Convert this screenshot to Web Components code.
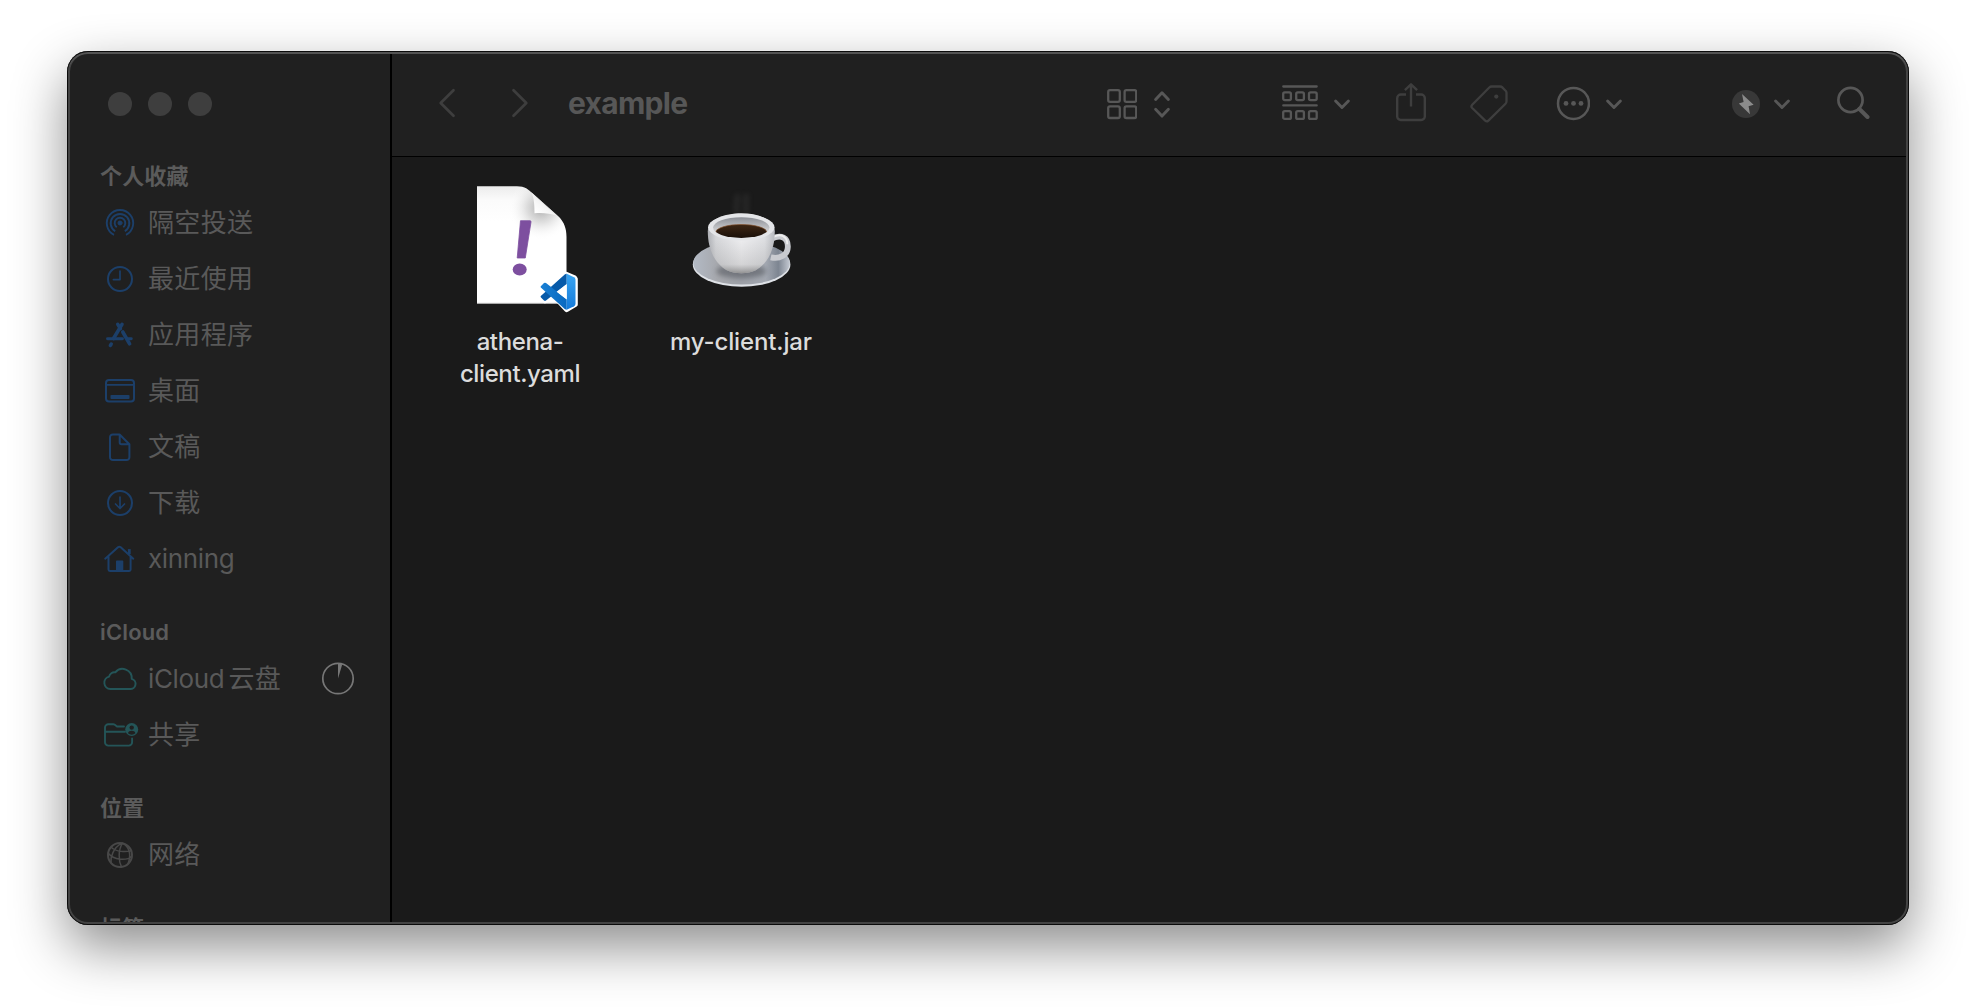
<!DOCTYPE html>
<html lang="zh-CN">
<head>
<meta charset="utf-8">
<title>example</title>
<style>
html,body{margin:0;height:100%;background:#fff;overflow:hidden}
body{font-family:Inter,"Noto Sans CJK SC",sans-serif;-webkit-font-smoothing:antialiased}
</style>
</head>
<body>
<finder-window>
  <side-bar slot="side">
    <side-section heading="个人收藏">
      <side-item icon="airdrop">隔空投送</side-item>
      <side-item icon="clock">最近使用</side-item>
      <side-item icon="apps">应用程序</side-item>
      <side-item icon="desktop">桌面</side-item>
      <side-item icon="doc">文稿</side-item>
      <side-item icon="download">下载</side-item>
      <side-item icon="home"><span style="letter-spacing:-.35px">xinning</span></side-item>
    </side-section>
    <side-section heading="iCloud">
      <side-item icon="cloud" tone="teal"><span style="letter-spacing:-.35px">iCloud</span><span style="margin-left:4px">云盘</span><glyph-icon slot="end" name="progress"></glyph-icon></side-item>
      <side-item icon="shared" tone="teal">共享</side-item>
    </side-section>
    <side-section heading="位置">
      <side-item icon="globe" tone="gray">网络</side-item>
    </side-section>
    <side-section heading="标签"></side-section>
  </side-bar>
  <tool-bar slot="tools" heading="example"></tool-bar>
  <file-item slot="files" icon="yaml"><span style="letter-spacing:-.4px">athena-<br>client.yaml</span></file-item>
  <file-item slot="files" icon="jar"><span style="letter-spacing:-.15px">my-client.jar</span></file-item>
</finder-window>

<script>
const stroke = (w, body, width = 2) =>
  `<svg width="${w}" height="44" viewBox="0 0 ${w} 44" fill="none" stroke="currentColor" stroke-width="${width}" stroke-linecap="round" stroke-linejoin="round">${body}</svg>`;

const ICONS = {
  airdrop: stroke(44, `<circle cx="22" cy="22" r="2" fill="currentColor" stroke-width="1"/>
    <path d="M18.7 26.2a5.3 5.3 0 1 1 6.6 0M17.2 30.2a9.3 9.3 0 1 1 9.6 0M16 33.9a13.2 13.2 0 1 1 12 0" stroke-width="1.9" stroke-linecap="butt"/>`),
  clock: stroke(44, `<circle cx="22" cy="22" r="12"/><path d="M22 14v8.6h-6.6" stroke-width="1.7"/>`),
  apps: stroke(44, `<path d="M24 11.400 15.500 25.500M19.800 11.400l2.600 4.200M24.800 19l6.800 11.800M12.400 32.400l.8-1.300" stroke-width="3.600"/>
    <path d="M9.500 25.700h15M29.300 25.700h4" stroke-width="2.900"/>`),
  desktop: stroke(44, `<rect x="8" y="11" width="28" height="21.500" rx="3"/><path d="M8 15.800h28" stroke-width="1.700"/>
    <rect x="12.500" y="26" width="19" height="4" rx=".8" fill="currentColor" stroke="none"/>`),
  doc: stroke(44, `<path d="M14.800 9.500h6.800l9.800 9.800v12.900a2.800 2.800 0 0 1-2.800 2.800H14.800a2.800 2.800 0 0 1-2.800-2.800V12.300a2.800 2.800 0 0 1 2.800-2.800zM21.700 10v7.500a1.800 1.800 0 0 0 1.800 1.800H31"/>`),
  download: stroke(44, `<circle cx="22" cy="22" r="12"/><path d="M22 16.200v10.800M17.500 23l4.500 4.500 4.500-4.500" stroke-width="1.700"/>`),
  home: stroke(44, `<path d="M7.200 21.700 20 10.300a2.100 2.100 0 0 1 2.700 0l12.600 11.400M10.500 19.500v13a1.400 1.400 0 0 0 1.400 1.400h19.300a1.400 1.400 0 0 0 1.400-1.400V19.500"/>
    <path d="M31.300 12.100v5" stroke-width="2.800" stroke-linecap="butt"/><path d="M18 34v-9.700a.8.800 0 0 1 .8-.8h5.700a.8.800 0 0 1 .8.800v9.700z" fill="currentColor" stroke="none"/>`),
  cloud: stroke(44, `<path d="M12.300 32a6.300 6.300 0 0 1-1.200-12.400 5.300 5.300 0 0 1 6.200-4.200 9.200 9.200 0 0 1 16.400 6.400 5.200 5.200 0 0 1-1.800 10.200z" stroke-width="1.900"/>`),
  shared: stroke(44, `<path d="M26 13.500h-7l-2.200-1.700a3 3 0 0 0-1.600-.5h-4.700A3.300 3.300 0 0 0 7 14.500v14.800a3.300 3.300 0 0 0 3.300 3.300h20.500a3.300 3.300 0 0 0 3.300-3.300V25.500M7 18.700h20" stroke-width="1.900"/>
    <circle cx="33.700" cy="16.500" r="6.500" fill="currentColor" stroke="none"/><circle cx="33.700" cy="14.600" r="2.200" fill="#202020" stroke="none"/><path d="M30 20.200c.6-3.200 6.800-3.200 7.400 0a5.500 5.500 0 0 1-7.400 0z" fill="#202020" stroke="none"/>`),
  globe: stroke(44, `<circle cx="22" cy="22" r="12"/><path d="M23.800 10.200C15 15 12.500 24 13 29.800M24.500 10.200C20 17 20.500 28 23.500 33.900M24.500 10.200c7 3 9 12 5.500 20.500M13.500 14.500c5 4.500 14 4.500 20 3.200M10 20c6 7.500 19 8 23.700 3.300" stroke-width="1.500"/>`),
  progress: `<svg width="34" height="34" viewBox="0 0 34 34"><circle cx="17" cy="16.500" r="15.200" fill="none" stroke="#777" stroke-width="1.700"/><path d="M17 16.500V1.500l4.300.8z" fill="#777"/></svg>`,

  back: stroke(18, `<path d="M15.500 8.300 2.700 21l12.800 12.800" stroke-width="2.700"/>`),
  forward: stroke(18, `<path d="M2.500 8.300 15.300 21 2.500 33.800" stroke-width="2.700"/>`),
  grid: stroke(30, `<rect x="1.200" y="8.200" width="11.600" height="11.600" rx="1.800"/><rect x="17.600" y="8.200" width="11.600" height="11.600" rx="1.800"/><rect x="1.200" y="24.400" width="11.600" height="11.600" rx="1.800"/><rect x="17.600" y="24.400" width="11.600" height="11.600" rx="1.800"/>`, 2.3),
  updown: stroke(18, `<path d="M2.600 17.500 9 10.700l6.400 6.800M2.600 27.300 9 34.100l6.400-6.800"/>`, 2.900),
  group: stroke(36, `<path d="M1.300 4.500h33.400M1.300 23.400h33.400"/>${[1.2,14.2,27].map(x => [10.400, 29.200].map(y => `<rect x="${x}" y="${y}" width="7.700" height="7.700" rx="1.500"/>`).join('')).join('')}`, 2.300),
  chevron: stroke(18, `<path d="M2.600 19 9 25.500l6.400-6.500"/>`, 2.900),
  share: stroke(30, `<path d="M10 12.500H4.800A3.600 3.600 0 0 0 1.200 16v18.400A3.600 3.600 0 0 0 4.800 38h20.400a3.600 3.600 0 0 0 3.600-3.600V16a3.600 3.600 0 0 0-3.600-3.500H20M15 24.500V2.500M8.900 8.200 15 2.300l6.100 5.900" stroke-linecap="butt"/>`, 2.400),
  tag: stroke(38, `<path d="M2.200 22.800 19.300 5.500a3.500 3.500 0 0 1 2.500-1h8.400a3 3 0 0 1 2.100.9l3.300 3.300a3 3 0 0 1 .9 2.100v8.400a3.500 3.500 0 0 1-1 2.500L18.400 38.600a2.300 2.300 0 0 1-3.200 0L2.200 26a2.300 2.300 0 0 1 0-3.200z"/><circle cx="26.300" cy="14.600" r="2.100" fill="currentColor" stroke="none"/>`, 2.300),
  more: stroke(34, `<circle cx="17.500" cy="21.400" r="15.500"/><g fill="currentColor" stroke="none"><circle cx="10" cy="21.400" r="2.400"/><circle cx="17.500" cy="21.400" r="2.400"/><circle cx="25" cy="21.400" r="2.400"/></g>`, 2.500),
  bolt: stroke(28, `<circle cx="14" cy="22" r="14" fill="#383838" stroke="none"/><path d="M10 12 21.600 22.700l-5 1.600 1.400 7.900L6.800 21.500l4.800-1.500z" fill="#8b8b8b" stroke="none"/>`),
  search: stroke(34, `<circle cx="14.500" cy="18" r="12.100"/><path d="M23.400 27 31.500 35" stroke-width="4"/>`, 2.700),

  yaml: `<svg width="128" height="128" viewBox="0 0 128 128" style="overflow:visible">
    <defs>
      <linearGradient id="pg" x1="0" y1="0" x2="0" y2="1"><stop offset="0" stop-color="#ececec"/><stop offset=".12" stop-color="#fbfbfb"/><stop offset=".3" stop-color="#fff"/></linearGradient>
      <radialGradient id="sh" gradientUnits="userSpaceOnUse" cx="85" cy="27" r="32"><stop offset="0" stop-color="#aaa"/><stop offset=".45" stop-color="#d4d4d4" stop-opacity=".75"/><stop offset="1" stop-color="#fff" stop-opacity="0"/></radialGradient>
      <linearGradient id="fold" gradientUnits="userSpaceOnUse" x1="79" y1="31" x2="91" y2="18"><stop offset="0" stop-color="#fff"/><stop offset=".6" stop-color="#f4f4f4"/><stop offset="1" stop-color="#ddd"/></linearGradient>
      <linearGradient id="vb" x1="0" y1="0" x2="0" y2="1"><stop offset="0" stop-color="#38a5f3"/><stop offset="1" stop-color="#1479d8"/></linearGradient>
      <linearGradient id="va" x1="0" y1="0" x2="1" y2="0"><stop offset="0" stop-color="#1a80d4"/><stop offset="1" stop-color="#0868c0"/></linearGradient>
    </defs>
    <path d="M21 5.300H61c8 0 11 3 16 7.500L103 36c5 5.500 7.500 11 7.500 20v66.500H21z" fill="url(#pg)"/>
    <path d="M21 5.300H61c8 0 11 3 16 7.500L103 36c5 5.500 7.500 11 7.500 20v66.500H21z" fill="url(#sh)"/>
    <path d="M21 122.300h89.500" stroke="#bbb" stroke-width=".8"/>
    <path d="M75 11.200c2.500 4 3.500 9 3.500 21 10-.6 16.500.7 22 2.100z" fill="url(#fold)"/>
    <path d="M64.500 39.700h9.500q1.200 0 1 1.300L69.300 77H61.200z" fill="#7d4f9f" stroke="#7d4f9f" stroke-width=".8"/><ellipse cx="63.700" cy="88.500" rx="7" ry="6" fill="#7d4f9f"/>
    <g transform="translate(84 90)">
      <path d="M.8 25 5.500 20.800.8 16 5 11.500 14 17 26.300 3 34.500 6.500 35.500 8v25.500L26.700 38.800 14 25.500 5 30z" fill="#fff" stroke="#fff" stroke-width="4.600" stroke-linejoin="round"/>
      <path d="M.8 25 24.700 3.600q1-.8 2-.8V13.300L6 29.500q-1 .8-2 0L1 26.600q-.8-.8-.2-1.600z" fill="#075aa9"/>
      <path d="M.8 16.600 24.700 38q1 .8 2 .8V28.300L6 12.100q-1-.8-2 0L1 15q-.8.800-.2 1.600z" fill="url(#va)"/>
      <path d="M26.700 2.800 34 6.300q1.500.8 1.500 2.500v23.900q0 1.700-1.500 2.500l-7.300 3.600z" fill="url(#vb)"/>
      <path d="M26.700 13.100v15.400L16.600 20.800z" fill="#fff"/>
    </g></svg>`,
  jar: `<svg width="128" height="128" viewBox="0 0 128 128">
    <defs>
      <linearGradient id="sa" x1="0" y1="0" x2="1" y2="0"><stop offset="0" stop-color="#b3bac5"/><stop offset=".25" stop-color="#a6a8ad"/><stop offset=".5" stop-color="#9ea1a8"/><stop offset=".75" stop-color="#a3a8b1"/><stop offset=".88" stop-color="#7d8591"/><stop offset="1" stop-color="#c5cad3"/></linearGradient>
      <linearGradient id="cp" x1="0" y1="0" x2="1" y2="0"><stop offset="0" stop-color="#aeb0b5"/><stop offset=".12" stop-color="#d4d5d8"/><stop offset=".5" stop-color="#ececee"/><stop offset=".85" stop-color="#dcdde0"/><stop offset="1" stop-color="#b8babf"/></linearGradient>
      <linearGradient id="cs" x1="0" y1="0" x2="0" y2="1"><stop offset=".45" stop-color="#777" stop-opacity="0"/><stop offset=".85" stop-color="#777" stop-opacity=".2"/><stop offset="1" stop-color="#555" stop-opacity=".6"/></linearGradient>
      <linearGradient id="in" x1="0" y1="0" x2="0" y2="1"><stop offset="0" stop-color="#8c8f96"/><stop offset=".6" stop-color="#c9cacd"/></linearGradient>
      <linearGradient id="cf" x1="0" y1="0" x2="0" y2="1"><stop offset="0" stop-color="#3e2715"/><stop offset="1" stop-color="#150c07"/></linearGradient>
      <filter id="b" x="-1" y="-1" width="3" height="3"><feGaussianBlur stdDeviation="2.500"/></filter>
    </defs>
    <g transform="translate(.3 .3)">
    <path d="M60 32c-3-6 1-12 0-19M68 32c3-6-2-12 2-19" fill="none" stroke="#555" stroke-width="5" opacity=".25" filter="url(#b)"/>
    <ellipse cx="64.300" cy="83.200" rx="48.800" ry="22.300" fill="#dfe2e7"/>
    <ellipse cx="64.300" cy="81.700" rx="48.300" ry="21.600" fill="url(#sa)"/>
    <ellipse cx="64" cy="90" rx="25" ry="7" fill="#50535a" opacity=".55" filter="url(#b)"/>
    <path d="M94 57.500c10-5 17-1 16.500 8.500-.4 8-8 12-17 10" fill="none" stroke="#c9cbd0" stroke-width="5.800"/>
    <path d="M95 56c9-4.500 15-1 15 7" fill="none" stroke="#eee" stroke-width="2"/>
    <path d="M30.500 50c0-24 67-24 67 0 0 21-9 33-19 39-8 4-21 4-29 0-10-6-19-18-19-39z" fill="url(#cp)"/>
    <path d="M30.500 50c0-24 67-24 67 0 0 21-9 33-19 39-8 4-21 4-29 0-10-6-19-18-19-39z" fill="url(#cs)"/>
    <ellipse cx="64" cy="46" rx="33.200" ry="13.200" fill="#e4e5e8"/>
    <ellipse cx="64" cy="46.300" rx="28.200" ry="10.300" fill="url(#in)"/>
    <clipPath id="c"><ellipse cx="64" cy="46.300" rx="28.200" ry="10.300"/></clipPath>
    <ellipse cx="64" cy="51" rx="25.500" ry="7.800" fill="url(#cf)" stroke="#83502c" stroke-width=".7" clip-path="url(#c)"/>
    </g>
  </svg>`
};

class Base extends HTMLElement {
  constructor() { super(); this.attachShadow({ mode: 'open' }); }
  connectedCallback() { this.shadowRoot.innerHTML = this.view(); }
}

customElements.define('glyph-icon', class extends Base {
  view() { return `<style>:host{display:block;flex:none}svg{display:block}</style>${ICONS[this.getAttribute('name')]}`; }
});

customElements.define('finder-window', class extends Base {
  view() { return `<style>
    :host{display:block;box-sizing:border-box;padding:51px 67px 83px;height:1008px;width:1976px}
    .win{position:relative;display:flex;height:874px;border-radius:21px;overflow:hidden;background:#1a1a1a}
    .cast{border-radius:21px;box-shadow:0 22px 54px rgba(0,0,0,.45)}
    .win::after{content:"";position:absolute;inset:0;border-radius:21px;pointer-events:none;box-shadow:inset 0 0 0 1px #0b0b0b,inset 0 2px 0 1px rgba(255,255,255,.09),inset 0 0 0 3px #434343}
    .main{flex:1;display:flex;flex-direction:column}
    .files{display:flex;gap:1px;padding:24px 0 0 18px}
  </style><div class="cast"><div class="win"><slot name="side"></slot><div class="main"><slot name="tools"></slot><div class="files"><slot name="files"></slot></div></div></div></div>`; }
});

customElements.define('side-bar', class extends Base {
  view() { return `<style>
    :host{display:flex;flex-direction:column;gap:26px;box-sizing:border-box;width:325px;flex:none;background:#202020;border-right:2px solid #000;overflow:hidden}
    .lights{display:flex;gap:16px;padding:41px 0 0 41px;height:24px;margin-bottom:15px}
    i{width:24px;height:24px;border-radius:50%;background:#3e3e3e}
  </style><div class="lights"><i></i><i></i><i></i></div><slot></slot>`; }
});

customElements.define('side-section', class extends Base {
  view() { return `<style>
    :host{display:block;flex:none}
    h2{margin:0;padding-left:33px;font-size:22px;font-weight:600;letter-spacing:.15px;line-height:38px;height:38px;color:#5b5b5b}
  </style><h2>${this.getAttribute('heading')}</h2><slot></slot>`; }
});

customElements.define('side-item', class extends Base {
  view() {
    const tone = { teal: '#245558', gray: '#484848' }[this.getAttribute('tone')] || '#1c3f69';
    return `<style>
    :host{display:flex;align-items:center;height:56px;padding:0 35px 0 31px;font-size:26px;letter-spacing:.35px;color:#595959;white-space:nowrap}
    .icon{color:${tone};margin-right:6px}
    .label{flex:1;line-height:56px}
  </style><glyph-icon class="icon" name="${this.getAttribute('icon')}"></glyph-icon><span class="label"><slot></slot></span><slot name="end"></slot>`; }
});

customElements.define('tool-bar', class extends Base {
  view() {
    const g = (name, gap, dim) => `<glyph-icon name="${name}" style="margin-left:${gap}px${dim ? ';color:#3e3e3e' : ''}"></glyph-icon>`;
    return `<style>
    :host{display:flex;align-items:center;box-sizing:border-box;height:106px;padding-top:1px;background:#202020;border-bottom:1px solid #000;color:#575757}
    h1{margin:-2px 0 0 39px;width:539px;font-size:30px;font-weight:700;line-height:40px;letter-spacing:-.7px}
  </style>${g('back', 46, 1)}${g('forward', 55, 1)}<h1>${this.getAttribute('heading')}</h1>
  ${g('grid', 0)}${g('updown', 16)}${g('group', 111)}${g('chevron', 15)}${g('share', 45, 1)}${g('tag', 44, 1)}${g('more', 48)}${g('chevron', 15)}${g('bolt', 109)}${g('chevron', 13)}${g('search', 45)}`; }
});

customElements.define('file-item', class extends Base {
  view() { return `<style>
    :host{display:flex;flex-direction:column;align-items:center;width:220px;gap:17px;font-size:24px;line-height:32px;color:#dcdcdc;text-align:center;font-weight:450}
  </style><glyph-icon name="${this.getAttribute('icon')}"></glyph-icon><div><slot></slot></div>`; }
});
</script>
</body>
</html>
